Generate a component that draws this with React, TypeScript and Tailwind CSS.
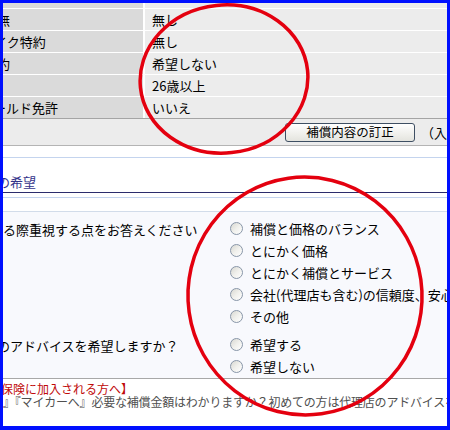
import React from "react";

const rows = [
  { label: "無", shift: "-ml-[6px]", value: "無し" },
  { label: "イク特約", shift: "-ml-[9px]", value: "無し" },
  { label: "約", shift: "-ml-[6px]", value: "希望しない" },
  { label: "", shift: "", value: "26歳以上" },
  { label: "ールド免許", shift: "-ml-[10px]", value: "いいえ" },
];

const priorities = [
  "補償と価格のバランス",
  "とにかく価格",
  "とにかく補償とサービス",
  "会社(代理店も含む)の信頼度、安心感",
  "その他",
];

const advice = ["希望する", "希望しない"];

// XP-style radio button, unchecked
const Radio = () => (
  <span className="inline-block w-[13px] h-[13px] shrink-0 rounded-full border border-[#8896a8] bg-gradient-to-br from-[#d8d8d2] via-[#f0f0ec] to-white" />
);

const Option = ({ label }: { label: string }) => (
  <div className="flex h-[22px] items-center gap-[7px] whitespace-nowrap pl-[8px]">
    <Radio />
    <span>{label}</span>
  </div>
);

export default function App() {
  return (
    <div className="relative w-[450px] h-[430px] overflow-hidden border-[#0010ff] border-t-[3px] border-l-[3px] border-r-[3px] border-b-[4px] bg-white text-[13px] text-black font-['Noto_Sans_CJK_JP','Noto_Sans',sans-serif] leading-none">
      {/* summary table */}
      <div className="grid grid-cols-[140px_1fr] gap-x-[2px] gap-y-px bg-white border-b border-[#a4a4a4]">
        <div className="h-[5px] bg-[#dadada]" />
        <div className="h-[5px] bg-[#ececec]" />
        {rows.map((r, i) => (
          <React.Fragment key={i}>
            <div className="flex h-[21px] items-center overflow-hidden whitespace-nowrap bg-[#dadada]">
              <span className={r.shift}>{r.label}</span>
            </div>
            <div className="flex h-[21px] items-center bg-[#ececec] pl-[7px]">{r.value}</div>
          </React.Fragment>
        ))}
      </div>

      {/* correction button */}
      <div className="flex h-[27px] items-center whitespace-nowrap bg-[#ececec] border-b border-[#b4b4b4] pl-[282px]">
        <button className="flex h-[19px] w-[130px] shrink-0 items-center justify-center rounded-[3px] border border-[#3e4f63] bg-gradient-to-b from-white to-[#e4e4de] text-[12.5px]">
          補償内容の訂正
        </button>
        <span className="ml-[6px]">（入力内容の確認）</span>
      </div>

      {/* section heading */}
      <div className="mt-[11px] border-t border-[#c4d4ee]" />
      <div className="flex h-[35px] items-center overflow-hidden whitespace-nowrap border-b border-[#2c2c6c] pt-[12px] text-[#33338a]">
        <span className="-ml-[6px]">の希望</span>
      </div>
      <div className="mt-[4px] border-t border-[#c4d4ee]" />
      <div className="mt-[13px] border-t border-[#d2dcea]" />

      {/* questions */}
      <div className="bg-[#f8f9fd] pt-[5px] pb-[1px] border-b border-[#a8a8a8]">
        <div className="grid grid-cols-[219px_1fr]">
          <div className="flex h-[22px] items-center whitespace-nowrap overflow-hidden pt-[3px]">
            る際重視する点をお答えください
          </div>
          <div className="overflow-hidden">
            {priorities.map((p) => (
              <Option key={p} label={p} />
            ))}
          </div>
        </div>
        <div className="mt-[6px] grid grid-cols-[219px_1fr]">
          <div className="flex h-[22px] items-center whitespace-nowrap overflow-hidden pt-[2px]">
            <span className="-ml-[6px]">のアドバイスを希望しますか？</span>
          </div>
          <div>
            {advice.map((p) => (
              <Option key={p} label={p} />
            ))}
          </div>
        </div>
      </div>

      {/* notice */}
      <div className="whitespace-nowrap pt-[3px] text-[12px] leading-[13px]">
        <p className="-ml-[2px] text-[#c00a0a]">保険に加入される方へ】</p>
        <p className="text-[#505050] tracking-[-0.2px]">
          』『マイカーへ』必要な補償金額はわかりますか？初めての方は代理店のアドバイスを
        </p>
      </div>

      {/* red hand-drawn circles over the page */}
      <svg className="pointer-events-none absolute -left-[3px] -top-[3px]" width="450" height="430" viewBox="0 0 450 430">
        <ellipse cx="224" cy="79" rx="84" ry="74" fill="none" stroke="#e4000f" strokeWidth="3.5" transform="rotate(-6 224 79)" />
        <ellipse cx="305" cy="296" rx="117" ry="119" fill="none" stroke="#e4000f" strokeWidth="3.5" transform="rotate(-8 305 296)" />
      </svg>
    </div>
  );
}
